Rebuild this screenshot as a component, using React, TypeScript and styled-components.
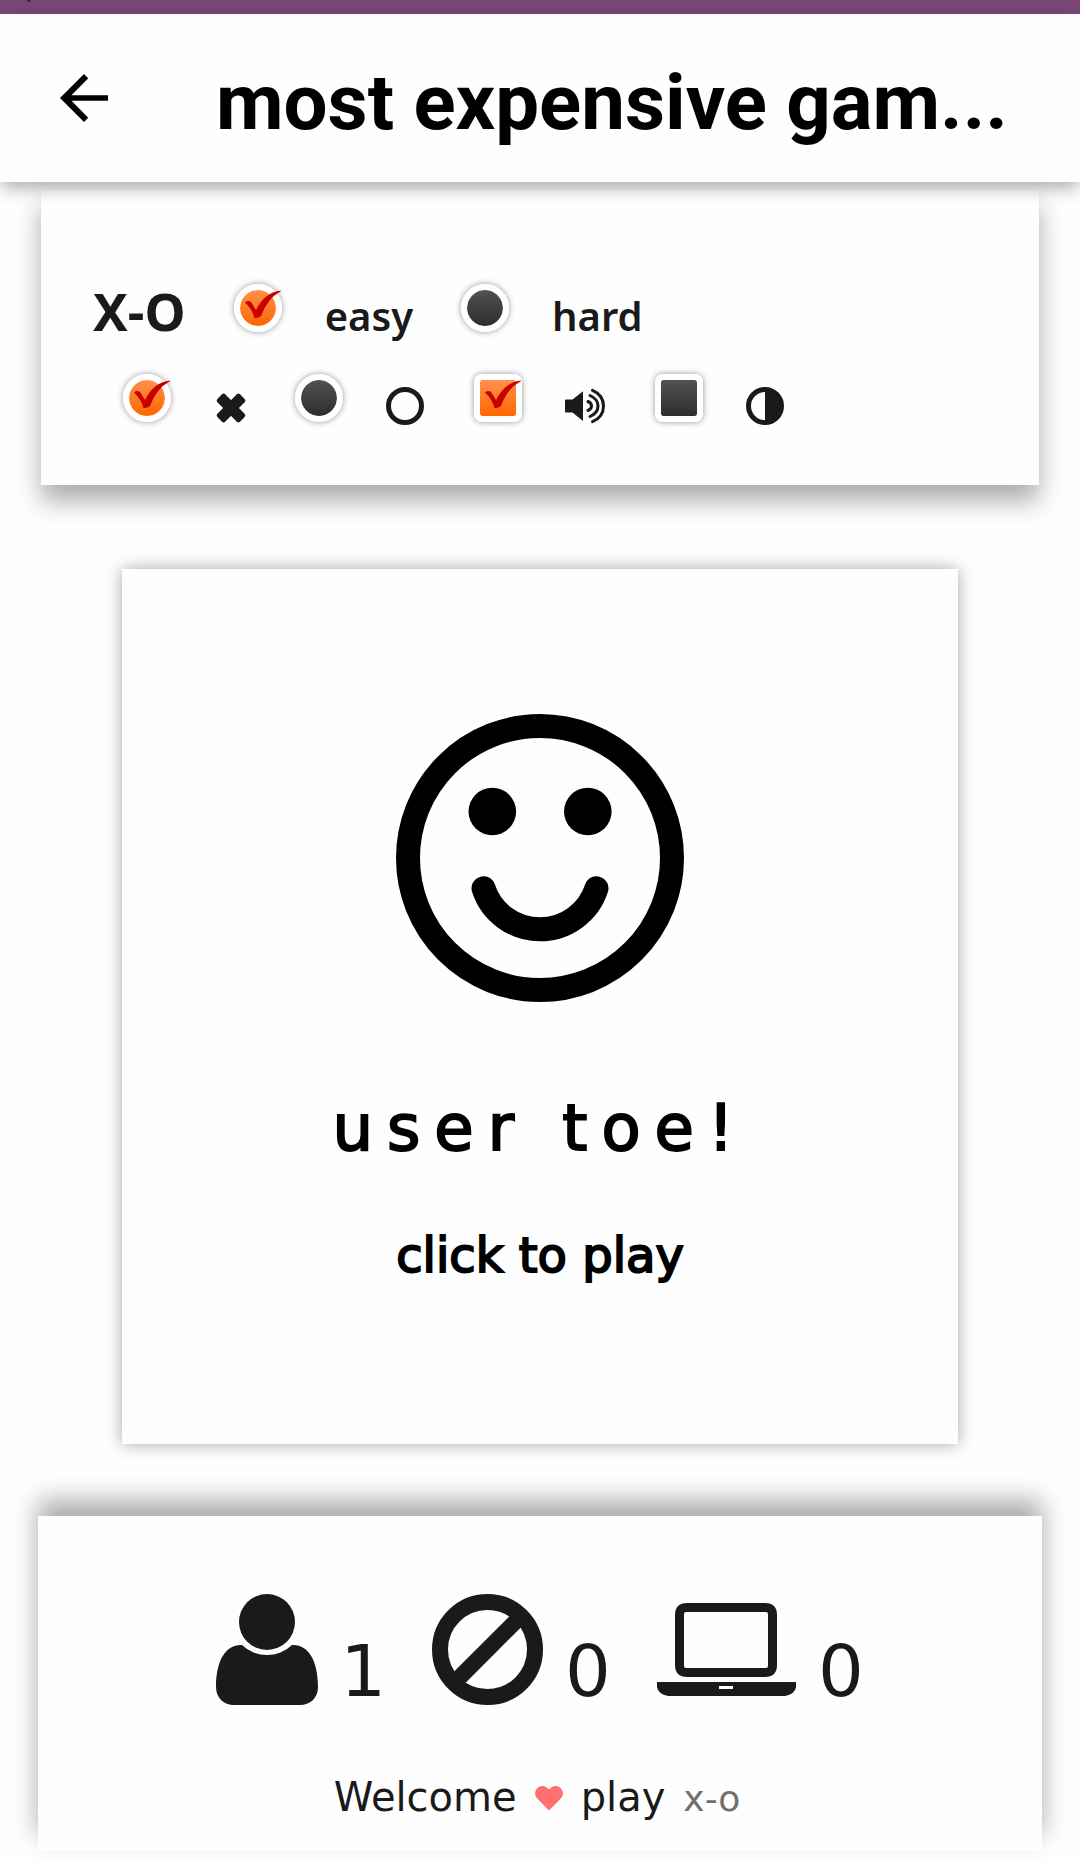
import React from "react";
import styled, { createGlobalStyle } from "styled-components";

const INK = "#1a1a1a";

const GlobalStyle = createGlobalStyle`
  *, *::before, *::after { box-sizing: border-box; }
  body {
    margin: 0;
    background: #fefefe;
    color: ${INK};
    font-family: "DejaVu Sans", sans-serif;
  }
  svg { display: block; flex: none; }
  h1, h2, p { margin: 0; }
`;

const Page = styled.div`
  display: flex;
  flex-direction: column;
  overflow: hidden;
`;

const StatusStrip = styled.div`
  height: 14px;
  padding-left: 27px;
  background: #794476;
`;

const AppBar = styled.header`
  position: relative;
  z-index: 1;
  display: flex;
  align-items: center;
  height: 168px;
  padding: 0 48px;
  gap: 96px;
  background: #fefefe;
  box-shadow: 0 8px 16px -2px rgba(0, 0, 0, 0.32);
`;

const BackButton = styled.button`
  flex: none;
  width: 72px;
  height: 72px;
  padding: 0;
  border: 0;
  background: none;
  color: #000;
`;

const Title = styled.h1`
  padding-top: 10px;
  color: #000;
  font: 700 78px/88px "Roboto", sans-serif;
  white-space: nowrap;
`;

const Settings = styled.form`
  display: flex;
  flex-direction: column;
  gap: 42px;
  margin: 8px 41px 0;
  padding: 94px 52px 63px;
  background: #fefefe;
  box-shadow: 0 16px 24px rgba(0, 0, 0, 0.33);
`;

const OptionRow = styled.div<{ $indent?: boolean }>`
  display: flex;
  align-items: flex-start;
  gap: ${(p) => (p.$indent ? 50 : 48)}px;
  height: 48px;
  padding-left: ${(p) => (p.$indent ? 30 : 0)}px;
`;

const Heading = styled.h2`
  padding-top: 3px;
  font: 700 52px/48px "Noto Sans", sans-serif;
`;

const Option = styled.label`
  display: flex;
  align-items: flex-start;
  gap: 43px;
`;

const OptionText = styled.span`
  padding-top: 8px;
  font: 600 40px/48px "Noto Sans", sans-serif;
`;

const OptionIcon = styled.span`
  padding-top: 13px;
`;

const Control = styled.span`
  position: relative;
  display: block;
  width: 48px;
  height: 48px;
`;

const Tick = styled.svg`
  position: absolute;
  inset: 0;
  visibility: hidden;
  pointer-events: none;
`;

const Toggle = styled.input`
  appearance: none;
  display: block;
  width: 48px;
  height: 48px;
  margin: 0;
  border: 6px solid #fff;
  border-radius: ${(p) => (p.type === "radio" ? "50%" : "8px")};
  background: linear-gradient(#525252, #2d2d2d) padding-box;
  box-shadow: 0 0 6px rgba(0, 0, 0, 0.42);

  &:checked {
    background: linear-gradient(#ff914d, #ff6600) padding-box;
  }
  &:checked + ${Tick} {
    visibility: visible;
  }
`;

const Board = styled.button`
  display: flex;
  flex-direction: column;
  align-items: center;
  margin: 84px 122px 0;
  padding: 145px 0 157px;
  border: 0;
  background: #fefefe;
  color: #000;
  font-family: inherit;
  box-shadow: 0 0 16px rgba(0, 0, 0, 0.35);
`;

const PlayerName = styled.span`
  margin-top: 86px;
  font-size: 64px;
  line-height: 80px;
  letter-spacing: 14px;
  -webkit-text-stroke: 2px #000;
`;

const PlayHint = styled.span`
  margin-top: 55px;
  font-size: 48px;
  line-height: 64px;
  -webkit-text-stroke: 2px #000;
`;

const Score = styled.footer`
  display: flex;
  flex-direction: column;
  align-items: center;
  margin: 72px 38px 14px;
  padding: 78px 0 22px;
  background: #fefefe;
  box-shadow: 0 -16px 24px rgba(0, 0, 0, 0.33);
`;

const Tally = styled.div`
  display: flex;
  gap: 46px;
`;

const TallyItem = styled.div`
  display: flex;
  align-items: flex-start;
  gap: 22px;
`;

const TallyIcon = styled.span<{ $low?: boolean }>`
  padding-top: ${(p) => (p.$low ? 9 : 0)}px;
`;

const Count = styled.span`
  padding-top: 35px;
  font-size: 72px;
  line-height: 84px;
`;

const Welcome = styled.p`
  display: flex;
  align-items: baseline;
  gap: 18px;
  margin-top: 54px;
  padding-right: 6px;
  font-size: 40px;
  line-height: 60px;
`;

const Muted = styled.span`
  color: #707070;
  font-size: 36px;
`;

const TickMark = () => (
  <Tick width="48" height="48" viewBox="0 0 48 48" aria-hidden="true">
    <path
      fill="#c90000"
      d="M11 18.5Q14 16 17 18L22 26Q31 8 47 6.5Q47.5 7.5 45 8.5Q34 14 27 32Q24 34.5 20.5 34Q18 25 11 18.5z"
    />
  </Tick>
);

type ChoiceProps = {
  type: "radio" | "checkbox";
  name: string;
  label?: string;
  checked?: boolean;
  children: React.ReactNode;
};

const Choice = ({ type, name, label, checked, children }: ChoiceProps) => (
  <Option>
    <Control>
      <Toggle type={type} name={name} aria-label={label} defaultChecked={checked} />
      <TickMark />
    </Control>
    {children}
  </Option>
);

const BackArrow = () => (
  <svg width="72" height="72" viewBox="0 0 24 24" fill="currentColor" aria-hidden="true">
    <path d="M20 11.1H7.83l5.59-5.69L12 4l-8 8 8 8 1.41-1.41L7.83 12.9H20z" />
  </svg>
);

const CrossIcon = () => (
  <svg width="31" height="38" viewBox="0 0 31 38" fill={INK} overflow="visible" aria-hidden="true">
    <g transform="translate(17 21)">
      <rect x="-16" y="-5.5" width="32" height="11" rx="2.2" transform="rotate(45)" />
      <rect x="-16" y="-5.5" width="32" height="11" rx="2.2" transform="rotate(-45)" />
    </g>
  </svg>
);

const RingIcon = () => (
  <svg width="38" height="38" viewBox="0 0 38 38" aria-hidden="true">
    <circle cx="19" cy="19" r="16.5" fill="none" stroke={INK} strokeWidth="5" />
  </svg>
);

const SoundIcon = () => (
  <svg width="40" height="38" viewBox="1 0 40 38" aria-hidden="true">
    <path fill={INK} d="M2 12.5H8.5L19 4.2V34L8.5 25.5H2Q1 25.5 1 24.5V13.5Q1 12.5 2 12.5z" />
    <g fill="none" stroke={INK} strokeWidth="3" strokeLinecap="round">
      <path d="M24 14.5Q27.5 16 27.5 19T24 23.5" />
      <path d="M26 8.5Q34 12 34 19T26 29.5" />
      <path d="M28.5 3.3Q39.5 8 39.5 19T28.5 34.7" />
    </g>
  </svg>
);

const ContrastIcon = () => (
  <svg width="38" height="38" viewBox="0 0 38 38" aria-hidden="true">
    <circle cx="19" cy="19" r="16.5" fill="none" stroke={INK} strokeWidth="5" />
    <path fill={INK} d="M19 2A17 17 0 0 1 19 36z" />
  </svg>
);

const SmileIcon = () => (
  <svg width="288" height="288" viewBox="0 0 288 288" aria-hidden="true">
    <g fill="none" stroke="#000" strokeWidth="24" strokeLinecap="round">
      <circle cx="144" cy="144" r="132" />
      <path d="M87.5 174.3A59.4 59.4 0 0 0 200.5 174.3" />
    </g>
    <circle cx="96.3" cy="97.5" r="23.8" />
    <circle cx="191.8" cy="97.5" r="23.8" />
  </svg>
);

const PersonIcon = () => (
  <svg width="102" height="111" viewBox="0 0 102 111" fill={INK} aria-hidden="true">
    <circle cx="51" cy="28" r="28" />
    <path d="M26 51A36 36 0 0 0 76 51C92 50 102 66 102 93C102 104 94 111 84 111H18C8 111 0 104 0 93C0 66 10 50 26 51z" />
  </svg>
);

const BanIcon = () => (
  <svg width="111" height="111" viewBox="0 0 111 111" fill="none" stroke={INK} strokeWidth="16" aria-hidden="true">
    <circle cx="55.5" cy="55.5" r="47.5" />
    <path d="M22 89L89 22" />
  </svg>
);

const LaptopIcon = () => (
  <svg width="139" height="93" viewBox="0 0 139 93" fill={INK} fillRule="evenodd" aria-hidden="true">
    <path d="M30 0H108Q120 0 120 12V62Q120 74 108 74H30Q18 74 18 62V12Q18 0 30 0zM29 9Q27 9 27 11V63Q27 65 29 65H109Q111 65 111 63V11Q111 9 109 9z" />
    <path d="M0 79H139V84Q138 91 128 93H11Q1 91 0 84zM62 83V86H76V83z" />
  </svg>
);

const HeartIcon = () => (
  <svg width="28" height="25" viewBox="0 0 28 25" fill="#ff6f6f" role="img" aria-label="love">
    <path d="M14 24.5L2.2 12.5C-.6 9.6-.6 5 2.2 2.2C5-.6 9-.6 12 1.8L14 3.2L16 1.8C19-.6 23-.6 25.800 2.2C28.6 5 28.6 9.6 25.8 12.5z" />
  </svg>
);

export default function App() {
  return (
    <Page>
      <GlobalStyle />
      <StatusStrip>
        <svg width="4" height="2" viewBox="0 0 4 2" aria-hidden="true">
          <path d="M0 0H4L2 2H1z" fill="#3c1440" />
        </svg>
      </StatusStrip>
      <AppBar>
        <BackButton type="button" aria-label="Back">
          <BackArrow />
        </BackButton>
        <Title>most expensive gam...</Title>
      </AppBar>

      <Settings>
        <OptionRow>
          <Heading>X-O</Heading>
          <Choice type="radio" name="level" checked>
            <OptionText>easy</OptionText>
          </Choice>
          <Choice type="radio" name="level">
            <OptionText>hard</OptionText>
          </Choice>
        </OptionRow>
        <OptionRow $indent>
          <Choice type="radio" name="mark" label="Play as X" checked>
            <OptionIcon><CrossIcon /></OptionIcon>
          </Choice>
          <Choice type="radio" name="mark" label="Play as O">
            <OptionIcon><RingIcon /></OptionIcon>
          </Choice>
          <Choice type="checkbox" name="sound" label="Sound" checked>
            <OptionIcon><SoundIcon /></OptionIcon>
          </Choice>
          <Choice type="checkbox" name="contrast" label="Dark theme">
            <OptionIcon><ContrastIcon /></OptionIcon>
          </Choice>
        </OptionRow>
      </Settings>

      <Board type="button">
        <SmileIcon />
        <PlayerName>user toe!</PlayerName>
        <PlayHint>click to play</PlayHint>
      </Board>

      <Score>
        <Tally>
          <TallyItem>
            <TallyIcon><PersonIcon /></TallyIcon>
            <Count>1</Count>
          </TallyItem>
          <TallyItem>
            <TallyIcon><BanIcon /></TallyIcon>
            <Count>0</Count>
          </TallyItem>
          <TallyItem>
            <TallyIcon $low><LaptopIcon /></TallyIcon>
            <Count>0</Count>
          </TallyItem>
        </Tally>
        <Welcome>
          <span>Welcome</span>
          <HeartIcon />
          <span>play</span>
          <Muted>x-o</Muted>
        </Welcome>
      </Score>
    </Page>
  );
}
